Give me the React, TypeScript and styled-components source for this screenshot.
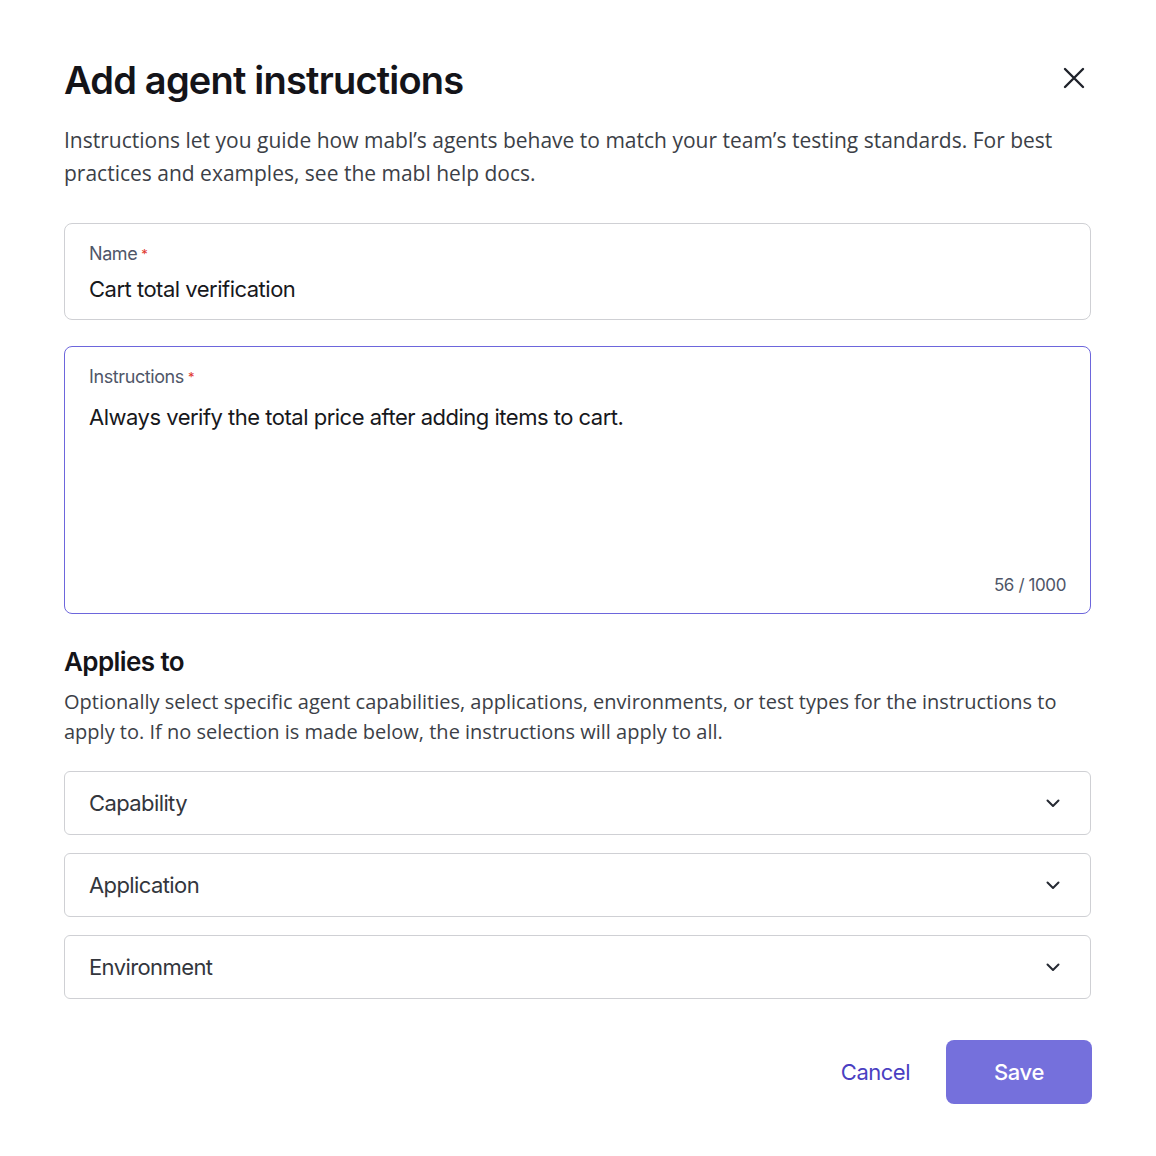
import React from 'react'
import styled, { createGlobalStyle } from 'styled-components'

const GlobalStyle = createGlobalStyle`
    *{
        box-sizing:border-box;
    }
    body{
        margin:0;
        background:#fff;
        font-family:"Open Sans", sans-serif;
    }
`

const Dialog = styled.div`
    width:1091px;
    padding:56px 0 0 64px;
    display:flex;
    flex-direction:column;
`
const Header = styled.div`
    display:flex;
    justify-content:space-between;
    align-items:center;
`
const Title = styled.h1`
    margin:0;
    font-family:Inter, sans-serif;
    font-weight:600;
    font-size:38px;
    letter-spacing:-0.8px;
    color:#141419;
    line-height:48px;
`
const CloseButton = styled.button`
    border:none;
    background:none;
    padding:0;
    margin-right:6px;
    margin-top:-4px;
    display:flex;
    cursor:pointer;
`
const Lead = styled.p`
    margin:20px 0 0;
    font-size:21px;
    line-height:33px;
    color:#3c3f47;
`
const Field = styled.div<{ $focused?: boolean; $tall?: boolean }>`
    margin-top:${p => (p.$tall ? '26px' : '33px')};
    border:1px solid ${p => (p.$focused ? '#6d66dc' : '#cfd0d4')};
    border-radius:8px;
    padding:17px 24px 0;
    height:${p => (p.$tall ? '268px' : '97px')};
    display:flex;
    flex-direction:column;
    font-family:Inter, sans-serif;
`
const Label = styled.div`
    font-size:18px;
    color:#4f5668;
    letter-spacing:-0.4px;
    line-height:26px;
    span{
        color:#e0352b;
        font-size:13px;
        vertical-align:top;
        margin-left:4px;
    }
`
const Value = styled.div<{ $gap?: number }>`
    margin-top:${p => p.$gap ?? 8}px;
    font-size:22px;
    color:#17181c;
    letter-spacing:-0.5px;
    line-height:28px;
`
const Counter = styled.div`
    margin-top:auto;
    margin-bottom:18px;
    align-self:flex-end;
    font-size:17px;
    color:#4f5668;
    letter-spacing:-0.4px;
`
const SectionTitle = styled.h2`
    margin:32px 0 0;
    font-family:Inter, sans-serif;
    font-weight:600;
    font-size:26px;
    letter-spacing:-0.6px;
    color:#141419;
    line-height:32px;
`
const SectionText = styled.p`
    margin:9px 0 0;
    font-size:20px;
    line-height:30px;
    color:#3c3f47;
`
const SelectList = styled.div`
    margin-top:24px;
    display:flex;
    flex-direction:column;
    gap:18px;
`
const Select = styled.button`
    height:64px;
    border:1px solid #cfd0d4;
    border-radius:6px;
    background:#fff;
    padding:0 30px 0 24px;
    display:flex;
    align-items:center;
    justify-content:space-between;
    font-family:Inter, sans-serif;
    font-size:22px;
    letter-spacing:-0.6px;
    color:#33363d;
    cursor:pointer;
`
const Footer = styled.div`
    margin-top:41px;
    display:flex;
    justify-content:flex-end;
    align-items:center;
    gap:18px;
`
const TextButton = styled.button`
    border:none;
    background:none;
    padding:0 18px;
    height:64px;
    font-family:Inter, sans-serif;
    font-size:22px;
    letter-spacing:-0.5px;
    color:#4a3fc2;
    cursor:pointer;
`
const PrimaryButton = styled.button`
    width:146px;
    height:64px;
    margin-right:-1px;
    border:none;
    border-radius:8px;
    background:#7570dc;
    color:#fff;
    font-family:Inter, sans-serif;
    font-weight:500;
    font-size:22px;
    letter-spacing:-0.4px;
    cursor:pointer;
`

const Chevron = () => (
    <svg width="14" height="9" viewBox="0 0 14 9" fill="none">
        <path d="M1.5 1.5L7 7l5.5-5.5" stroke="#262a33" strokeWidth="2" strokeLinecap="round" strokeLinejoin="round"/>
    </svg>
)

const selects = ['Capability', 'Application', 'Environment']

const App = () => {
    return (
        <>
            <GlobalStyle/>
            <Dialog>
                <Header>
                    <Title>Add agent instructions</Title>
                    <CloseButton aria-label="Close">
                        <svg width="22" height="22" viewBox="0 0 22 22" fill="none">
                            <path d="M2 2l18 18M20 2L2 20" stroke="#1f222a" strokeWidth="2.4" strokeLinecap="round"/>
                        </svg>
                    </CloseButton>
                </Header>
                <Lead>
                    Instructions let you guide how mabl’s agents behave to match your team’s testing standards. For best practices and examples, see the mabl help docs.
                </Lead>
                <Field>
                    <Label>Name<span>*</span></Label>
                    <Value>Cart total verification</Value>
                </Field>
                <Field $focused $tall>
                    <Label>Instructions<span>*</span></Label>
                    <Value $gap={13}>Always verify the total price after adding items to cart.</Value>
                    <Counter>56 / 1000</Counter>
                </Field>
                <SectionTitle>Applies to</SectionTitle>
                <SectionText>
                    Optionally select specific agent capabilities, applications, environments, or test types for the instructions to apply to. If no selection is made below, the instructions will apply to all.
                </SectionText>
                <SelectList>
                    {selects.map(s => (
                        <Select key={s}>
                            {s}
                            <Chevron/>
                        </Select>
                    ))}
                </SelectList>
                <Footer>
                    <TextButton>Cancel</TextButton>
                    <PrimaryButton>Save</PrimaryButton>
                </Footer>
            </Dialog>
        </>
    )
}

export default App
